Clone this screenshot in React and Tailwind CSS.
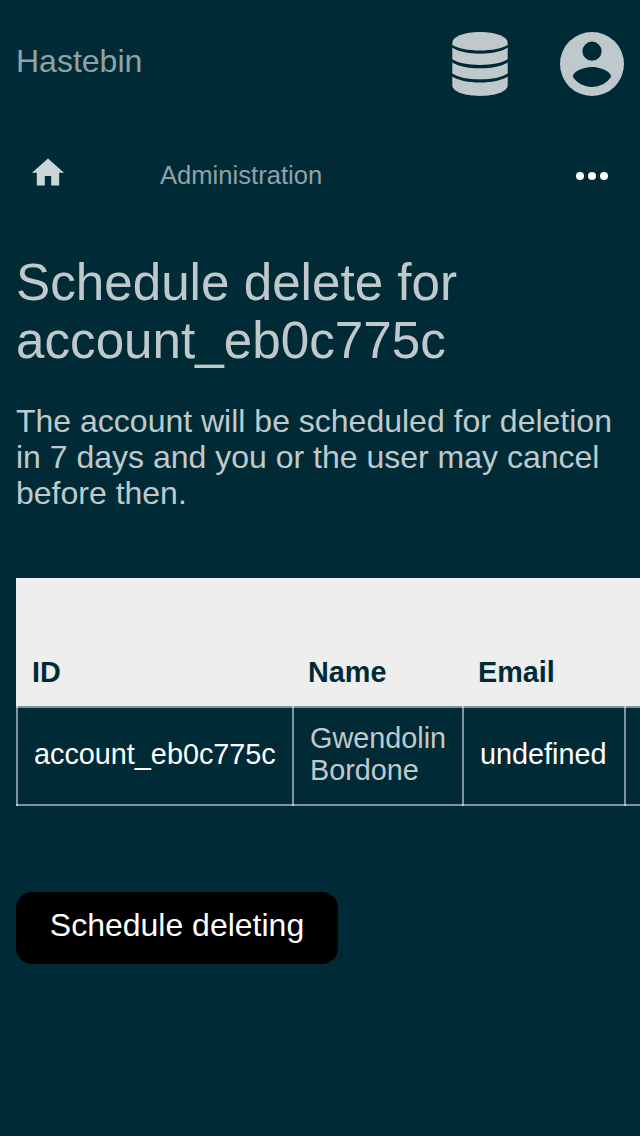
function DatabaseIcon() {
  return (
    <svg viewBox="0 0 56 64" className="h-16 w-14" fill="currentColor" aria-hidden="true">
      <path d="M28 0C12.400 0 .3 4.600.3 11v2C6 16.400 16 18.500 28 18.500s22-2.100 27.700-5.500v-2C55.700 4.600 43.600 0 28 0Z" />
      <path d="M.3 15.500C6 19.500 16 21.700 28 21.700s22-2.200 27.700-6.200v11.700C50 30.900 40 32.900 28 32.900S6 30.900 .3 27.200Z" />
      <path d="M.3 30.400C6 34.200 16 36.300 28 36.300s22-2.100 27.700-5.900v11C50 45.300 40 47.300 28 47.300S6 45.300.3 41.400Z" />
      <path d="M.3 44.600C6 48.500 16 50.600 28 50.600s22-2.100 27.700-6v9C55.700 59.400 43.600 64 28 64S.3 59.400.3 53.600Z" />
    </svg>
  );
}

function AccountIcon() {
  return (
    <svg viewBox="2 2 20 20" className="size-16" fill="currentColor" aria-hidden="true">
      <path d="M12 19.200c-2.500 0-4.710-1.280-6-3.200.03-2 4-3.100 6-3.100s5.970 1.100 6 3.100a7.230 7.230 0 0 1-6 3.200M12 5a3 3 0 0 1 3 3 3 3 0 0 1-3 3 3 3 0 0 1-3-3 3 3 0 0 1 3-3m0-3A10 10 0 0 0 2 12a10 10 0 0 0 10 10 10 10 0 0 0 10-10A10 10 0 0 0 12 2Z" />
    </svg>
  );
}

function HomeIcon() {
  return (
    <svg viewBox="2 2.75 20 17.5" className="h-7 w-8" fill="currentColor" aria-hidden="true">
      <path d="M10 20v-6h4v6h5v-8h3L12 3 2 12h3v8z" />
    </svg>
  );
}

function DotsIcon() {
  return (
    <svg viewBox="0 0 32 8" className="h-2 w-8" fill="currentColor" aria-hidden="true">
      <circle cx="4" cy="4" r="4" />
      <circle cx="16" cy="4" r="4" />
      <circle cx="28" cy="4" r="4" />
    </svg>
  );
}

const columns = ["ID", "Name", "Email", ""];

function Cell({ children, muted }) {
  return (
    <div
      role="cell"
      className={`flex items-center border-l-2 border-white/50 px-4 pb-1 ${muted ? "" : "text-white"}`}
    >
      {children}
    </div>
  );
}

export default function App() {
  return (
    <div className="h-[1136px] w-[640px] overflow-hidden bg-[#002b36] font-['Liberation_Sans',Arial,sans-serif] text-[32px] leading-9 text-white/75">
      <header className="flex h-32 items-center justify-between px-4">
        <a className="pb-1.5 text-[#8fa2a7]">Hastebin</a>
        <div className="flex gap-[52px]">
          <DatabaseIcon />
          <AccountIcon />
        </div>
      </header>

      <nav className="flex h-24 items-center px-8">
        <a className="w-32 pb-2 text-white/80">
          <HomeIcon />
        </a>
        <a className="flex-1 pb-0.5 text-[25.6px] leading-[30px] text-[#8fa2a7]">Administration</a>
        <button className="text-white" aria-label="More">
          <DotsIcon />
        </button>
      </nav>

      <main className="px-4 pt-[30px]">
        <h1 className="text-[51.2px] leading-[58px]">
          Schedule delete for account_eb0c775c
        </h1>
        <p className="mt-[33px]">
          The account will be scheduled for deletion in 7 days and you or the user may cancel
          before then.
        </p>

        <div role="table" className="mt-[67px] w-[624px] overflow-hidden text-[28.8px] leading-8">
          <div
            role="row"
            className="grid h-32 w-[800px] grid-cols-[276px_170px_162px_1fr] items-end bg-[#eee] font-bold text-[#002b36]"
          >
            {columns.map((name) => (
              <div role="columnheader" key={name} className="px-4 pb-[18px]">
                {name}
              </div>
            ))}
          </div>
          <div
            role="row"
            className="grid h-[100px] w-[800px] grid-cols-[276px_170px_162px_1fr] shadow-[inset_0_2px_0_rgba(255,255,255,0.5),inset_0_-2px_0_rgba(255,255,255,0.5)]"
          >
            <Cell>account_eb0c775c</Cell>
            <Cell muted>Gwendolin Bordone</Cell>
            <Cell>undefined</Cell>
            <Cell />
          </div>
        </div>

        <button className="mt-[86px] block h-[72px] w-[322px] rounded-2xl bg-black pb-1.5 text-white">
          Schedule deleting
        </button>
      </main>
    </div>
  );
}
